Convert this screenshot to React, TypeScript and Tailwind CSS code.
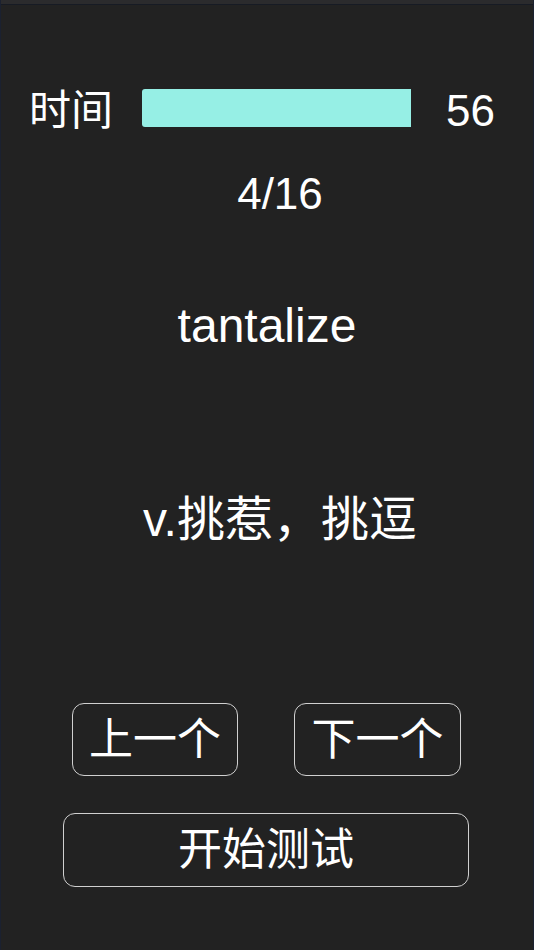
import React from 'react';

const font = { fontFamily: '"Liberation Sans", "Noto Sans CJK SC", sans-serif' };

export default function App() {
    const elapsed = 56;

    return (
        <div
            className="w-[534px] h-[950px] bg-[#222222] border-x border-[#1b2130] flex flex-col text-white overflow-hidden"
            style={font}
        >
            {/* top strip */}
            <div className="h-[5px] bg-[#2b2b2d] border-b border-[#171b24]" />

            {/* timer row */}
            <div className="mt-[84px] h-[38px] flex items-center">
                <span className="ml-[28px] w-[113px] text-[42px] leading-none pt-[5px]">时间</span>
                <div className="w-[269px] h-[38px] bg-[#96efe5] rounded-l-[3px]" />
                <span className="ml-[35px] text-[44px] leading-none pt-[5px]">{elapsed}</span>
            </div>

            {/* progress */}
            <div className="mt-[45px] h-[44px] pl-[26px] text-center text-[44px] leading-none">4/16</div>

            {/* word */}
            <div className="mt-[86px] h-[48px] text-center text-[48px] leading-none">tantalize</div>

            {/* meaning */}
            <div className="mt-[146px] h-[48px] pl-[26px] text-center text-[48px] leading-none">v.挑惹，挑逗</div>

            {/* prev / next */}
            <div className="mt-[159px] flex gap-[56px] pl-[71px]">
                <button className="w-[166px] h-[73px] rounded-[12px] border-[1.5px] border-[#d0d0d0] text-[44px] leading-none flex items-center justify-center">
                    上一个
                </button>
                <button className="w-[167px] h-[73px] rounded-[12px] border-[1.5px] border-[#d0d0d0] text-[44px] leading-none flex items-center justify-center">
                    下一个
                </button>
            </div>

            {/* start */}
            <button className="mt-[37px] ml-[62px] w-[406px] h-[74px] rounded-[12px] border-[1.5px] border-[#d0d0d0] text-[44px] leading-none flex items-center justify-center">
                开始测试
            </button>
        </div>
    );
}
